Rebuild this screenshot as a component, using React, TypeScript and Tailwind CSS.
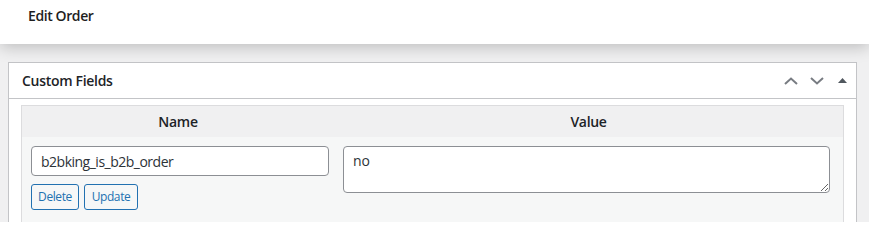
export default function App() {
  return (
    <div className="h-[222px] w-[869px] overflow-hidden bg-[#f0f0f1] font-['Open_Sans','Noto_Sans',sans-serif] text-[#1d2327]">
      <header className="relative z-10 flex h-[44px] items-start bg-white pl-[28px] pt-[5px] shadow-[0_3px_16px_rgba(0,0,0,0.22)]">
        <h1 className="text-[14px] font-semibold tracking-[-0.4px] text-[#1e1e1e]">Edit Order</h1>
      </header>

      <div className="pl-[8px] pr-[12px] pt-[18px]">
        <div className="border border-[#c3c4c7] bg-white">
          <div className="flex h-[36px] items-center justify-between border-b border-[#c3c4c7] pl-[13px] pr-[9px]">
            <h2 className="text-[14px] font-semibold tracking-[-0.3px]">Custom Fields</h2>
            <div className="flex items-center gap-[12px] text-[#787c82]">
              <svg width="14" height="8" viewBox="0 0 14 8" fill="none" stroke="currentColor" strokeWidth="2">
                <polyline points="1,7 7,1.5 13,7" />
              </svg>
              <svg width="14" height="8" viewBox="0 0 14 8" fill="none" stroke="currentColor" strokeWidth="2">
                <polyline points="1,1 7,6.5 13,1" />
              </svg>
              <svg width="9" height="6" viewBox="0 0 9 6" className="ml-[2px] text-[#50575e]">
                <polygon points="0,5 4.5,0 9,5" fill="currentColor" />
              </svg>
            </div>
          </div>

          <div className="px-[12px] pt-[6px]">
            <div className="border border-[#dcdcde] bg-[#f6f7f7]">
              <div className="flex h-[31px] items-center bg-[#f0f0f1] text-[14px] font-semibold tracking-[-0.3px]">
                <div className="w-[312px] text-center">Name</div>
                <div className="flex-1 text-center">Value</div>
              </div>
              <div className="flex h-[90px] pt-[9px]">
                <div className="w-[312px] pl-[9px]">
                  <input
                    readOnly
                    value="b2bking_is_b2b_order"
                    className="h-[30px] w-[298px] rounded-[4px] border border-[#8c8f94] bg-white px-[9px] text-[14px] tracking-[-0.5px] text-[#2c3338] outline-none"
                  />
                  <div className="mt-[8px] flex gap-[5px]">
                    <button className="h-[26px] w-[48px] rounded-[3px] border border-[#2271b1] bg-[#f6f7f7] text-[12px] tracking-[-0.4px] text-[#2271b1]">
                      Delete
                    </button>
                    <button className="h-[26px] w-[54px] rounded-[3px] border border-[#2271b1] bg-[#f6f7f7] text-[12px] tracking-[-0.4px] text-[#2271b1]">
                      Update
                    </button>
                  </div>
                </div>
                <div className="flex-1 pl-[9px]">
                  <textarea
                    readOnly
                    value="no"
                    className="block h-[47px] w-[487px] resize-y rounded-[4px] border border-[#8c8f94] bg-white px-[9px] py-[3px] text-[14px] text-[#2c3338] outline-none"
                  />
                </div>
              </div>
            </div>
          </div>
        </div>
      </div>
    </div>
  );
}
